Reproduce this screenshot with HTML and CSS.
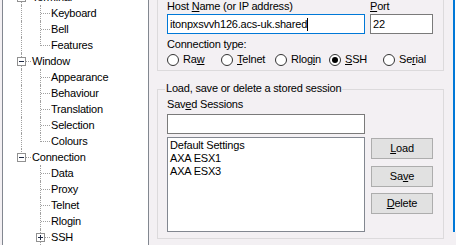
FILE: index.html
```html
<!DOCTYPE html>
<html lang="en">
<head>
<meta charset="utf-8">
<title>PuTTY Configuration</title>
<link rel="stylesheet" href="styles.css">
</head>
<body>
<div class="dialog">
  <nav class="tree">
    <ul class="tree-list">
      <li class="row"><span class="cell v h"><span class="exp"></span></span><span class="node">Terminal</span></li>
      <li class="row"><span class="cell v"></span><span class="cell v h"></span><span class="node">Keyboard</span></li>
      <li class="row"><span class="cell v"></span><span class="cell v h"></span><span class="node">Bell</span></li>
      <li class="row"><span class="cell v"></span><span class="cell up h"></span><span class="node">Features</span></li>
      <li class="row"><span class="cell v h"><span class="exp"></span></span><span class="node">Window</span></li>
      <li class="row"><span class="cell v"></span><span class="cell v h"></span><span class="node">Appearance</span></li>
      <li class="row"><span class="cell v"></span><span class="cell v h"></span><span class="node">Behaviour</span></li>
      <li class="row"><span class="cell v"></span><span class="cell v h"></span><span class="node">Translation</span></li>
      <li class="row"><span class="cell v"></span><span class="cell v h"></span><span class="node">Selection</span></li>
      <li class="row"><span class="cell v"></span><span class="cell up h"></span><span class="node">Colours</span></li>
      <li class="row"><span class="cell up h"><span class="exp"></span></span><span class="node">Connection</span></li>
      <li class="row"><span class="cell"></span><span class="cell v h"></span><span class="node">Data</span></li>
      <li class="row"><span class="cell"></span><span class="cell v h"></span><span class="node">Proxy</span></li>
      <li class="row"><span class="cell"></span><span class="cell v h"></span><span class="node">Telnet</span></li>
      <li class="row"><span class="cell"></span><span class="cell v h"></span><span class="node">Rlogin</span></li>
      <li class="row"><span class="cell"></span><span class="cell v h"><span class="exp plus"></span></span><span class="node">SSH</span></li>
    </ul>
  </nav>
  <main class="panel">
    <section class="group dest">
      <div class="host-row">
        <div class="field host">
          <div class="caption">Host <u>N</u>ame (or IP address)</div>
          <div class="textbox focused">itonpxsvvh126.acs-uk.shared<span class="caret"></span></div>
        </div>
        <div class="field port">
          <div class="caption"><u>P</u>ort</div>
          <div class="textbox">22</div>
        </div>
      </div>
      <div class="caption conn-label">Connection type:</div>
      <div class="radios">
        <div class="radio"><span class="dot"></span><span>Ra<u>w</u></span></div>
        <div class="radio"><span class="dot"></span><span><u>T</u>elnet</span></div>
        <div class="radio"><span class="dot"></span><span>Rlog<u>i</u>n</span></div>
        <div class="radio"><span class="dot checked"></span><span><u>S</u>SH</span></div>
        <div class="radio"><span class="dot"></span><span>Se<u>r</u>ial</span></div>
      </div>
    </section>
    <fieldset class="group sessions">
      <legend>Load, save or delete a stored session</legend>
      <div class="caption">Sav<u>e</u>d Sessions</div>
      <div class="textbox wide"></div>
      <div class="list-row">
        <ul class="listbox">
          <li>Default Settings</li>
          <li>AXA ESX1</li>
          <li>AXA ESX3</li>
        </ul>
        <div class="buttons">
          <div class="btn"><u>L</u>oad</div>
          <div class="btn">Sa<u>v</u>e</div>
          <div class="btn btn-last"><u>D</u>elete</div>
        </div>
      </div>
    </fieldset>
  </main>
  <div class="edge"><div class="edge-line"></div></div>
</div>
</body>
</html>
```
FILE: styles.css
```css
* { box-sizing: border-box; }
html, body { margin: 0; padding: 0; }
body {
  width: 456px;
  height: 245px;
  overflow: hidden;
  background: #f3f0f3;
  font-family: "Liberation Sans", Arial, sans-serif;
  font-size: 11px;
  line-height: 13px;
  letter-spacing: -0.2px;
  color: #000;
}
u { text-decoration: underline; text-underline-offset: 1px; }

.dialog { display: flex; height: 245px; }

/* tree */
.tree {
  flex: none;
  width: 147px;
  height: 245px;
  margin-left: 2px;
  background: #fff;
  border-left: 1px solid #828790;
  border-right: 1px solid #828790;
  overflow: hidden;
}
.tree-list { list-style: none; margin: -11px 0 0; padding: 0; }
.row { display: flex; align-items: center; height: 16px; padding-left: 9px; }
.cell { position: relative; flex: none; width: 19px; height: 16px; }
.cell.v::before {
  content: ""; position: absolute; left: 9px; top: 0; bottom: 0;
  border-left: 1px dotted #a0a0a0;
}
.cell.up::before {
  content: ""; position: absolute; left: 9px; top: 0; height: 9px;
  border-left: 1px dotted #a0a0a0;
}
.cell.h::after {
  content: ""; position: absolute; left: 10px; right: 0; top: 8px;
  border-top: 1px dotted #a0a0a0;
}
.exp {
  position: absolute; left: 5px; top: 4px; width: 9px; height: 9px;
  border: 1px solid #919191; background: #fff; z-index: 1;
}
.exp::before {
  content: ""; position: absolute; left: 1px; top: 3px; width: 5px; height: 1px;
  background: #1f2a44;
}
.exp.plus::after {
  content: ""; position: absolute; left: 3px; top: 1px; width: 1px; height: 5px;
  background: #1f2a44;
}
.node { padding-left: 1px; white-space: nowrap; }

/* right panel */
.panel { flex: none; width: 304px; padding-left: 8px; }
.group { width: 287px; border: 1px solid #dcdadc; }
.dest { margin-top: -12px; padding: 11px 10px 4px 9px; }
.host-row { display: flex; gap: 5px; }
.field.host { width: 198px; }
.field.port { width: 63px; }
.caption { height: 13px; white-space: nowrap; }
.textbox {
  height: 20px;
  margin-top: 1px;
  border: 1px solid #7a7a7a;
  background: #fff;
  padding: 0 2px;
  line-height: 18px;
  white-space: nowrap;
  overflow: hidden;
}
.textbox.focused { border-color: #0078d7; }
.caret { display: inline-block; width: 1px; height: 13px; background: #000; vertical-align: -3px; }
.conn-label { margin-top: 4px; }
.radios { display: flex; margin-top: 2px; height: 13px; }
.radio { display: flex; align-items: center; width: 54px; flex: none; white-space: nowrap; }
.dot {
  flex: none; width: 12px; height: 12px; margin-right: 4px;
  border: 1px solid #333; border-radius: 50%; background: #fff;
  display: flex; align-items: center; justify-content: center;
}
.dot.checked::before { content: ""; width: 6px; height: 6px; border-radius: 50%; background: #000; }

.sessions { margin: 11px 0 0; padding: 1px 10px 6px 9px; min-inline-size: 0; }
.sessions legend { margin-left: -2px; padding: 0 1px 2px 1px; line-height: 13px; }
.textbox.wide { width: 198px; margin-top: 3px; }
.list-row { display: flex; gap: 6px; margin-top: 3px; }
.listbox {
  list-style: none; margin: 0; width: 198px; height: 95px;
  border: 1px solid #828790; background: #fff; padding: 1px 2px;
}
.listbox li { height: 13px; white-space: nowrap; }
.buttons { display: flex; flex-direction: column; padding-top: 1px; width: 62px; }
.btn {
  height: 21px; margin-bottom: 7px;
  border: 1px solid #adadad; background: #e1e1e1;
  text-align: center; line-height: 19px;
}
.btn:nth-child(2) { margin-bottom: 6px; }

.edge { flex: none; width: 3px; }
.edge-line { height: 232px; border-left: 2px solid #0078d7; background: #fff; }
```
